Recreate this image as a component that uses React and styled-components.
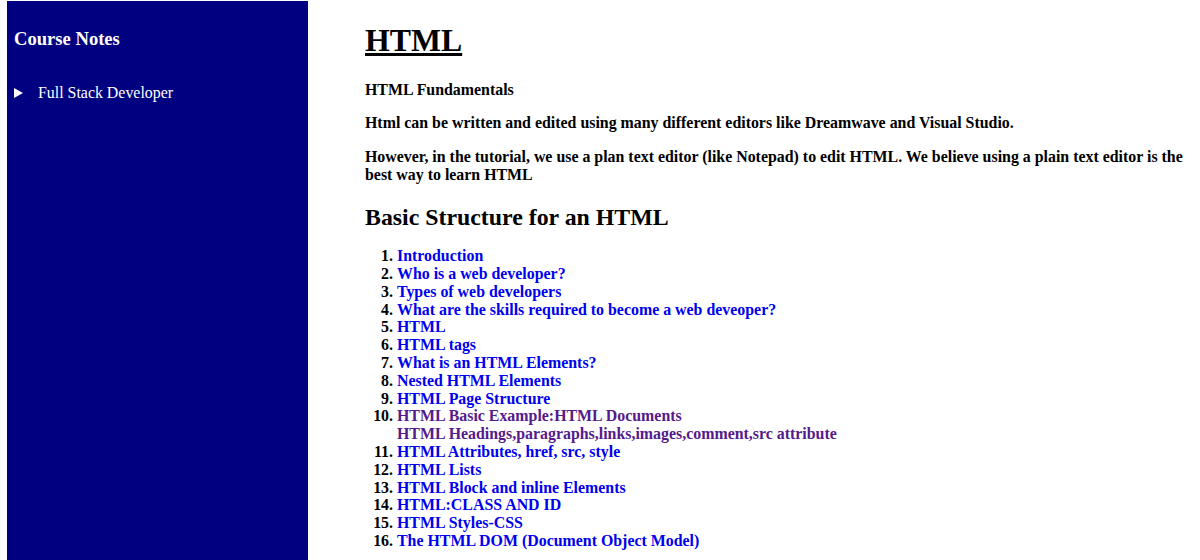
import React from "react";
import styled, { createGlobalStyle } from "styled-components";

const Global = createGlobalStyle`
  html, body { margin: 0; padding: 0; background: #fff; }
  body {
    font-family: "Liberation Serif", "Times New Roman", serif;
    font-size: 15.9px;
    line-height: 18px;
    color: #000;
  }
`;

const Page = styled.div`
  display: flex;
  align-items: flex-start;
  padding: 1px 8px 0 7px;
  min-height: 100vh;
  box-sizing: border-box;
`;

const Sidebar = styled.aside`
  flex: 0 0 301px;
  align-self: stretch;
  background: #000080;
  color: #fff;
  padding: 8px 7px;
  box-sizing: border-box;
  min-height: calc(100vh - 1px);
`;

const SideTitle = styled.h3`
  font-size: 1.17em;
  line-height: normal;
  font-weight: bold;
  margin: 1em 0;
`;

const Details = styled.details`
  margin-top: 34px;
`;

const Summary = styled.summary`
  list-style: none;
  display: flex;
  align-items: center;
  gap: 15px;
  cursor: pointer;
  &::-webkit-details-marker { display: none; }
`;

const Main = styled.main`
  flex: 1;
  margin-left: 57px;
  padding-top: 1px;
  font-weight: bold;
`;

const Title = styled.h1`
  font-size: 2em;
  line-height: normal;
  margin: 0.67em 0;
  text-decoration: underline;
`;

const Para = styled.p`
  margin: 1em 0;
`;

const SubTitle = styled.h2`
  font-size: 1.5em;
  line-height: normal;
  margin: 0.83em 0 16px;
`;

const List = styled.ol`
  margin: 1em 0;
  padding-left: 32px;
  line-height: 17.8px;
`;

const Item = styled.li`
  color: #000;
`;

const Link = styled.a`
  color: ${(p) => (p.$visited ? "#551A8B" : "#0000EE")};
  text-decoration: none;
`;

const items = [
  "Introduction",
  "Who is a web developer?",
  "Types of web developers",
  "What are the skills required to become a web deveoper?",
  "HTML",
  "HTML tags",
  "What is an HTML Elements?",
  "Nested HTML Elements",
  "HTML Page Structure",
  null,
  "HTML Attributes, href, src, style",
  "HTML Lists",
  "HTML Block and inline Elements",
  "HTML:CLASS AND ID",
  "HTML Styles-CSS",
  "The HTML DOM (Document Object Model)",
];

export default function App() {
  return (
    <>
      <Global />
      <Page>
        <Sidebar>
          <SideTitle>Course Notes</SideTitle>
          <Details>
            <Summary>
              <svg width="9" height="10" viewBox="0 0 9 10">
                <polygon points="0,0 9,5 0,10" fill="#fff" />
              </svg>
              <span>Full Stack Developer</span>
            </Summary>
          </Details>
        </Sidebar>
        <Main>
          <Title>HTML</Title>
          <Para>HTML Fundamentals</Para>
          <Para>
            Html can be written and edited using many different editors like
            Dreamwave and Visual Studio.
          </Para>
          <Para>
            However, in the tutorial, we use a plan text editor (like Notepad)
            to edit HTML. We believe using a plain text editor is the best way
            to learn HTML
          </Para>
          <SubTitle>Basic Structure for an HTML</SubTitle>
          <List>
            {items.map((t, i) =>
              t === null ? (
                <Item key={i}>
                  <Link href="#" $visited>
                    HTML Basic Example:HTML Documents
                    <br />
                    HTML Headings,paragraphs,links,images,comment,src attribute
                  </Link>
                </Item>
              ) : (
                <Item key={i}>
                  <Link href="#">{t}</Link>
                </Item>
              )
            )}
          </List>
        </Main>
      </Page>
    </>
  );
}
